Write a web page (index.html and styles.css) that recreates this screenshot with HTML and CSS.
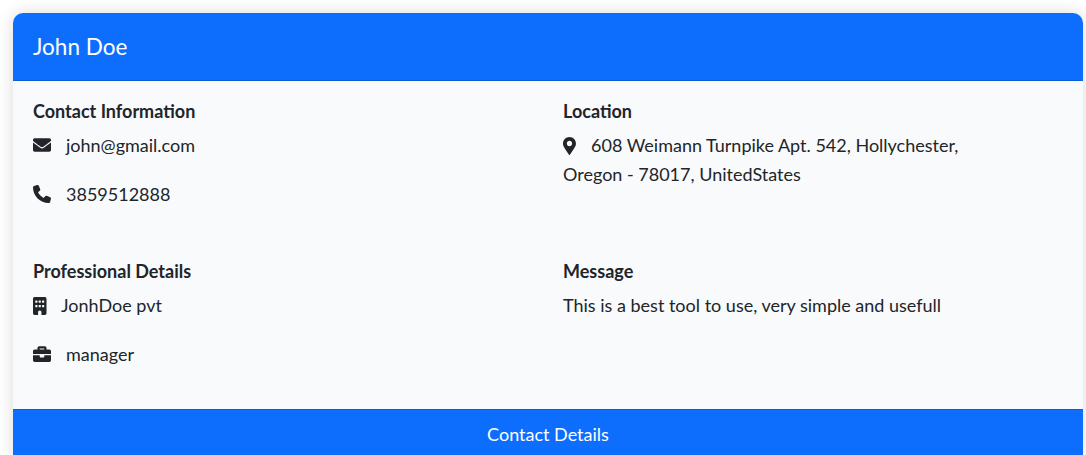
FILE: index.html
```html
<!DOCTYPE html>
<html lang="en">
<head>
    <meta charset="UTF-8">
    <meta name="viewport" content="width=device-width, initial-scale=1.0">
    <title>Contact Card</title>
    <link rel="stylesheet" href="styles.css">
</head>
<body>
    <div class="card">
        <div class="card-header">John Doe</div>

        <div class="card-body">
            <!-- Contact Information -->
            <section class="info-block">
                <h6>Contact Information</h6>
                <p class="info-line">
                    <svg class="icon" viewBox="0 0 512 512"><path d="M502.3 190.8c3.9-3.1 9.7-.2 9.7 4.7V400c0 26.5-21.5 48-48 48H48c-26.5 0-48-21.5-48-48V195.6c0-5 5.7-7.8 9.7-4.7 22.4 17.4 52.1 39.5 154.1 113.6 21.1 15.4 56.7 47.8 92.2 47.6 35.7.3 72-32.8 92.3-47.6 102-74.1 131.6-96.3 154-113.7zM256 320c23.2.4 56.6-29.2 73.4-41.4 132.7-96.3 142.8-104.7 173.4-128.7 5.8-4.5 9.2-11.5 9.2-18.9v-19c0-26.5-21.5-48-48-48H48C21.5 64 0 85.5 0 112v19c0 7.4 3.4 14.3 9.2 18.9 30.6 23.9 40.7 32.4 173.4 128.7 16.8 12.2 50.2 41.8 73.4 41.4z"/></svg>john@gmail.com
                </p>
                <p class="info-line">
                    <svg class="icon" viewBox="0 0 512 512"><path d="M164.9 24.6c-7.7-18.6-28-28.5-47.4-23.2l-88 24C12.1 30.2 0 46 0 64C0 311.4 200.6 512 448 512c18 0 33.8-12.1 38.6-29.5l24-88c5.3-19.4-4.6-39.7-23.2-47.4l-96-40c-16.3-6.8-35.2-2.1-46.3 11.6L304.7 368C234.3 334.7 177.3 277.7 144 207.3L193.3 167c13.7-11.2 18.4-30 11.6-46.3l-40-96z"/></svg>3859512888
                </p>
            </section>

            <!-- Location -->
            <section class="info-block">
                <h6>Location</h6>
                <p class="info-line address">
                    <svg class="icon icon-narrow" viewBox="0 0 384 512"><path d="M172.268 501.67C26.97 291.031 0 262.413 0 184 0 82.388 82.388 0 184 0s184 82.388 184 184c0 78.413-26.97 107.031-172.268 317.67-9.535 13.774-29.93 13.773-39.464 0zM184 260c41.974 0 76-34.026 76-76s-34.026-76-76-76-76 34.026-76 76 34.026 76 76 76z"/></svg>608 Weimann Turnpike Apt. 542, Hollychester, Oregon - 78017, UnitedStates
                </p>
            </section>

            <!-- Professional Details -->
            <section class="info-block">
                <h6>Professional Details</h6>
                <p class="info-line">
                    <svg class="icon icon-narrow" viewBox="0 0 384 512"><path d="M48 0C21.5 0 0 21.5 0 48V464c0 26.5 21.5 48 48 48h96V432c0-26.5 21.5-48 48-48s48 21.5 48 48v80h96c26.5 0 48-21.5 48-48V48c0-26.5-21.5-48-48-48H48zM64 240c0-8.8 7.2-16 16-16h32c8.8 0 16 7.2 16 16v32c0 8.8-7.2 16-16 16H80c-8.8 0-16-7.2-16-16V240zm112-16h32c8.8 0 16 7.2 16 16v32c0 8.8-7.2 16-16 16H176c-8.8 0-16-7.2-16-16V240c0-8.8 7.2-16 16-16zm80 16c0-8.8 7.2-16 16-16h32c8.8 0 16 7.2 16 16v32c0 8.8-7.2 16-16 16H272c-8.8 0-16-7.2-16-16V240zM80 96h32c8.8 0 16 7.2 16 16v32c0 8.8-7.2 16-16 16H80c-8.8 0-16-7.2-16-16V112c0-8.8 7.2-16 16-16zm80 16c0-8.8 7.2-16 16-16h32c8.8 0 16 7.2 16 16v32c0 8.8-7.2 16-16 16H176c-8.8 0-16-7.2-16-16V112zM272 96h32c8.8 0 16 7.2 16 16v32c0 8.8-7.2 16-16 16H272c-8.8 0-16-7.2-16-16V112c0-8.8 7.2-16 16-16z"/></svg>JonhDoe pvt
                </p>
                <p class="info-line">
                    <svg class="icon" viewBox="0 0 512 512"><path d="M320 336c0 8.84-7.16 16-16 16h-96c-8.84 0-16-7.16-16-16v-48H0v144c0 25.6 22.4 48 48 48h416c25.6 0 48-22.4 48-48V288H320v48zm144-208h-80V80c0-25.6-22.4-48-48-48H176c-25.6 0-48 22.4-48 48v48H48c-25.6 0-48 22.4-48 48v80h512v-80c0-25.6-22.4-48-48-48zm-144 0H192V96h128v32z"/></svg>manager
                </p>
            </section>

            <!-- Message -->
            <section class="info-block">
                <h6>Message</h6>
                <p class="info-line">This is a best tool to use, very simple and usefull</p>
            </section>
        </div>

        <div class="card-footer">Contact Details</div>
    </div>
</body>
</html>
```

FILE: styles.css
```css
body {
    margin: 0;
    padding: 13px 3px 0 13px;
    height: 455px;
    box-sizing: border-box;
    overflow: hidden;
    background-color: #fff;
    font-family: 'Lato', sans-serif;
    font-size: 18px;
    line-height: 29px;
    color: #212529;
}

.card {
    border-radius: 10px 10px 0 0;
    box-shadow: 0 0 16px rgba(0, 0, 0, 0.15);
    background-color: #f9fafc;
}

.card-header {
    height: 67px;
    padding-left: 20px;
    display: flex;
    align-items: center;
    background-color: #0d6efd;
    border-bottom: 1px solid #0b5ed7;
    border-radius: 10px 10px 0 0;
    color: white;
    font-size: 22.5px;
}

.card-body {
    display: grid;
    grid-template-columns: 530px 1fr;
    row-gap: 27px;
    padding: 16px 20px 20px;
    height: 328px;
    box-sizing: border-box;
}

.card-footer {
    padding: 10px 0 7px;
    text-align: center;
    background-color: #0d6efd;
    border-top: 1px solid #0b5ed7;
    color: white;
}

h6 {
    margin: 0 0 5px;
    font-size: 18px;
    font-weight: 700;
}

.info-line {
    margin: 0 0 20px;
}

.address {
    max-width: 440px;
}

.icon {
    width: 18px;
    height: 18px;
    margin-right: 15px;
    vertical-align: -2px;
    fill: #212529;
}

.icon-narrow {
    width: 13.5px;
    margin-right: 14.5px;
    vertical-align: -3px;
}
```
